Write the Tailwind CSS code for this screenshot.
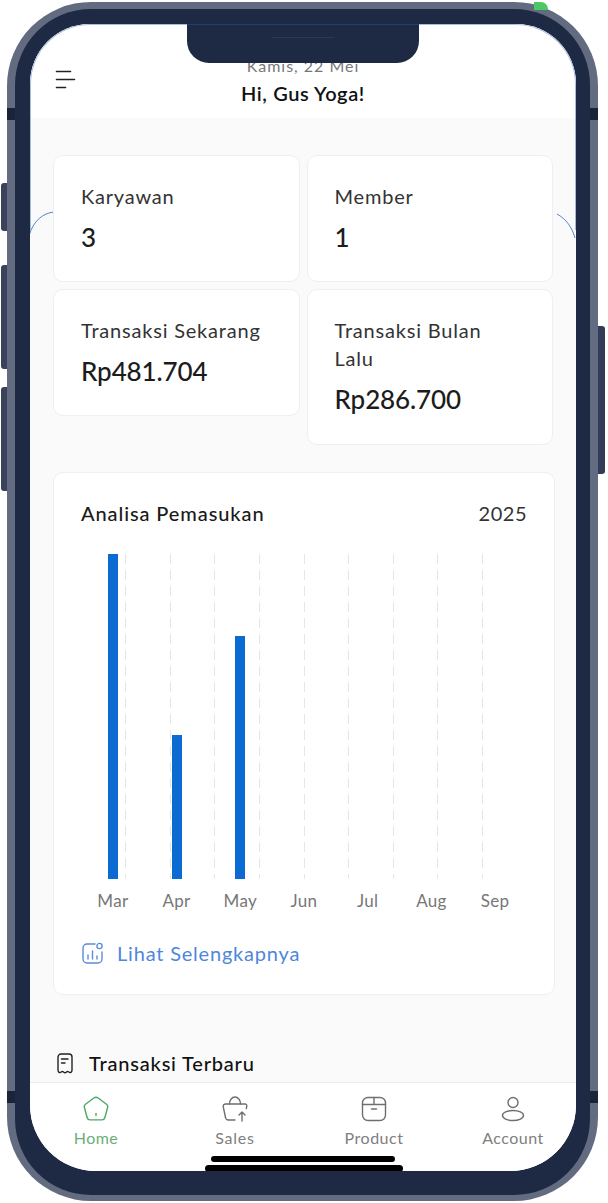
<!DOCTYPE html>
<html lang="en">
  <head>
    <meta charset="UTF-8" />
    <meta name="viewport" content="width=device-width, initial-scale=1.0" />
    <title>Dashboard</title>
    <script src="https://cdn.jsdelivr.net/npm/@tailwindcss/browser@4"></script>
  </head>
  <body class="bg-white font-['Lato',sans-serif] w-[608px] h-[1203px] overflow-hidden">
    <!-- Phone frame -->
    <div class="relative ml-[7px] mt-[2px] w-[591px] h-[1199px] rounded-[84px] bg-[#636b80] pl-[8px] pr-[8px] pt-[7px] pb-[6px]">
      <!-- Side buttons -->
      <div class="absolute -left-[6px] top-[181px] w-[6px] h-[48px] rounded-l-[3px] bg-[#3b435a]"></div>
      <div class="absolute -left-[6px] top-[263px] w-[6px] h-[104px] rounded-l-[3px] bg-[#3b435a]"></div>
      <div class="absolute -left-[6px] top-[385px] w-[6px] h-[104px] rounded-l-[3px] bg-[#3b435a]"></div>
      <div class="absolute -right-[7px] top-[324px] w-[7px] h-[148px] rounded-r-[3px] bg-[#333c57]"></div>
      <!-- Antenna slots -->
      <div class="absolute left-0 top-[106px] w-[8px] h-[12px] bg-[#1a2338]"></div>
      <div class="absolute right-0 top-[106px] w-[8px] h-[12px] bg-[#1a2338]"></div>
      <div class="absolute left-0 top-[1089px] w-[8px] h-[12px] bg-[#1a2338]"></div>
      <div class="absolute right-0 top-[1089px] w-[8px] h-[12px] bg-[#1a2338]"></div>
      <!-- Green corner artifact -->
      <div class="absolute left-[527px] top-0 w-[14px] h-[8px] rounded-tr-[7px] bg-[#4cc764]"></div>

      <!-- Bezel -->
      <div class="relative h-full rounded-[76px] bg-[#1e2a44] pl-[15px] pr-[14px] pt-[15px] pb-[24px]">
        <!-- Screen -->
        <div class="relative h-full rounded-t-[60px] rounded-b-[66px] overflow-hidden bg-[#fafafa] flex flex-col">
          <!-- Notch -->
          <div class="absolute left-[157px] top-0 w-[232px] h-[39px] rounded-b-[22px] bg-[#1e2a44] z-10">
            <div class="mx-auto mt-[13px] w-[62px] h-px bg-[#2d3852]"></div>
          </div>
          <!-- Blue edge on the upper screen -->
          <div class="absolute inset-x-0 top-0 h-[206px] rounded-t-[60px] border-x border-t border-[#2a5bb0]/40 z-10 pointer-events-none"></div>

          <!-- Header -->
          <div class="relative h-[94px] bg-white shrink-0">
            <svg class="absolute left-[25px] top-[45px]" width="21" height="20" viewBox="0 0 21 20" fill="none" stroke="#222" stroke-width="1.6" stroke-linecap="round">
              <path d="M1.500 2.500h14M1.500 10.500h18M1.500 18.500h9" />
            </svg>
            <div class="flex flex-col items-center pt-[31px]">
              <div class="text-[16px] leading-[22px] text-[#777] tracking-[1px]">Kamis, 22 Mei</div>
              <div class="mt-[2px] text-[20px] leading-[28px] font-semibold text-[#111] tracking-[0.6px]">Hi, Gus Yoga!</div>
            </div>
          </div>

          <!-- Content -->
          <div class="flex-1 min-h-0 px-[23px] pt-[37px] relative">
            <svg class="absolute -left-px top-[93px]" width="26" height="26" viewBox="0 0 26 26" fill="none" stroke="#2f66c4" stroke-width="0.8"><path d="M0 25C4 10 14 2 25 1" /></svg>
            <svg class="absolute right-0 top-[95px]" width="20" height="26" viewBox="0 0 20 26" fill="none" stroke="#2f66c4" stroke-width="0.8"><path d="M1 1C10 6 16 14 19 25" /></svg>

            <div class="flex gap-[7px] items-start relative">
              <div class="w-[247px] h-[127px] rounded-[10px] border border-[#efefef] bg-white pt-[26px] pl-[27px]">
                <div class="text-[20px] leading-[28px] text-[#333] tracking-[0.8px]">Karyawan</div>
                <div class="mt-[11px] text-[26px] leading-[32px] font-medium text-[#1c1c1c]">3</div>
              </div>
              <div class="w-[247px] h-[127px] rounded-[10px] border border-[#efefef] bg-white pt-[26px] pl-[27px]">
                <div class="text-[20px] leading-[28px] text-[#333] tracking-[0.8px]">Member</div>
                <div class="mt-[11px] text-[26px] leading-[32px] font-medium text-[#1c1c1c]">1</div>
              </div>
            </div>
            <div class="mt-[7px] flex gap-[7px] items-start relative">
              <div class="w-[247px] h-[127px] rounded-[10px] border border-[#efefef] bg-white pt-[26px] pl-[27px]">
                <div class="text-[20px] leading-[28px] text-[#333] tracking-[0.8px]">Transaksi Sekarang</div>
                <div class="mt-[11px] text-[26px] leading-[32px] font-medium text-[#1c1c1c] -tracking-[0.1px]">Rp481.704</div>
              </div>
              <div class="w-[247px] h-[156px] rounded-[10px] border border-[#efefef] bg-white pt-[26px] pl-[27px]">
                <div class="w-[170px] text-[20px] leading-[28px] text-[#333] tracking-[0.8px]">Transaksi Bulan Lalu</div>
                <div class="mt-[11px] text-[26px] leading-[32px] font-medium text-[#1c1c1c] -tracking-[0.1px]">Rp286.700</div>
              </div>
            </div>

            <!-- Chart card -->
            <div class="relative mt-[27px] w-[502px] h-[523px] rounded-[10px] border border-[#efefef] bg-white pl-[27px] pr-[27px] pt-[26px]">
              <div class="flex justify-between items-center h-[28px]">
                <div class="text-[20px] font-medium text-[#1a1a1a] tracking-[0.9px]">Analisa Pemasukan</div>
                <div class="text-[20px] text-[#333] tracking-[0.5px]">2025</div>
              </div>
              <div class="relative mt-[27px] h-[325px]">
                <div class="absolute left-[44px] right-[44px] top-0 bottom-0 flex justify-between">
                  <div class="w-px bg-[repeating-linear-gradient(to_bottom,#e6e6e6_0,#e6e6e6_10px,transparent_10px,transparent_16px)]"></div>
                  <div class="w-px bg-[repeating-linear-gradient(to_bottom,#e6e6e6_0,#e6e6e6_10px,transparent_10px,transparent_16px)]"></div>
                  <div class="w-px bg-[repeating-linear-gradient(to_bottom,#e6e6e6_0,#e6e6e6_10px,transparent_10px,transparent_16px)]"></div>
                  <div class="w-px bg-[repeating-linear-gradient(to_bottom,#e6e6e6_0,#e6e6e6_10px,transparent_10px,transparent_16px)]"></div>
                  <div class="w-px bg-[repeating-linear-gradient(to_bottom,#e6e6e6_0,#e6e6e6_10px,transparent_10px,transparent_16px)]"></div>
                  <div class="w-px bg-[repeating-linear-gradient(to_bottom,#e6e6e6_0,#e6e6e6_10px,transparent_10px,transparent_16px)]"></div>
                  <div class="w-px bg-[repeating-linear-gradient(to_bottom,#e6e6e6_0,#e6e6e6_10px,transparent_10px,transparent_16px)]"></div>
                  <div class="w-px bg-[repeating-linear-gradient(to_bottom,#e6e6e6_0,#e6e6e6_10px,transparent_10px,transparent_16px)]"></div>
                  <div class="w-px bg-[repeating-linear-gradient(to_bottom,#e6e6e6_0,#e6e6e6_10px,transparent_10px,transparent_16px)]"></div>
                </div>
                <div class="relative h-full grid grid-cols-7 items-end justify-items-center">
                  <div class="w-[10px] h-[325px] bg-[#0b6bd3]"></div>
                  <div class="w-[10px] h-[144px] bg-[#0b6bd3]"></div>
                  <div class="w-[10px] h-[243px] bg-[#0b6bd3]"></div>
                  <div></div><div></div><div></div><div></div>
                </div>
              </div>
              <div class="mt-[10px] grid grid-cols-7 text-center text-[17px] leading-[24px] text-[#777] tracking-[0.3px]">
                <div>Mar</div><div>Apr</div><div>May</div><div>Jun</div><div>Jul</div><div>Aug</div><div>Sep</div>
              </div>
              <div class="mt-[26px] flex items-center gap-[14px]">
                <svg width="22" height="22" viewBox="0 0 22 22" fill="none" stroke="#5b8ddb" stroke-width="1.4" stroke-linecap="round" class="shrink-0 ml-px">
                  <path d="M13 2H5a4 4 0 0 0-4 4v11a4 4 0 0 0 4 4h11a4 4 0 0 0 4-4V10" />
                  <circle cx="17.500" cy="4" r="2.600" />
                  <path d="M6 17v-4M10.500 17V9M15 17v-3" />
                </svg>
                <div class="-ml-px text-[20px] leading-[28px] text-[#4f86d9] tracking-[0.8px]">Lihat Selengkapnya</div>
              </div>
            </div>

            <!-- Recent transactions -->
            <div class="mt-[54px] ml-[4px] flex items-center gap-[17px]">
              <svg width="16" height="21" viewBox="0 0 16 21" fill="none" stroke="#222" stroke-width="1.4" stroke-linecap="round" stroke-linejoin="round" class="shrink-0">
                <path d="M1 17V4a3 3 0 0 1 3-3h8a3 3 0 0 1 3 3v13c0 3-2 3-3.500 1.800C10 17.500 9.500 19.800 8 19.800S6 17.500 4.500 18.800C3 20 1 20 1 17Z" />
                <path d="M4.500 6H11M4.500 10H8" />
              </svg>
              <div class="-ml-px text-[20px] leading-[28px] font-medium text-[#111] tracking-[0.8px]">Transaksi Terbaru</div>
            </div>
          </div>

          <!-- Bottom nav -->
          <div class="relative h-[89px] shrink-0 bg-white border-t border-[#ececec] pl-[26px] pr-[23px] pt-[13px] flex justify-between">
            <div class="w-[80px] flex flex-col items-center">
              <svg width="26" height="26" viewBox="0 0 26 26" fill="none" stroke="#4fa862" stroke-width="1.4" stroke-linecap="round" stroke-linejoin="round">
                <path d="M10.800 2 2.500 8.300a3 3 0 0 0-1.100 3.200l2.800 10.200a3 3 0 0 0 2.900 2.200h11.800a3 3 0 0 0 2.900-2.200l2.800-10.200a3 3 0 0 0-1.100-3.200L15.200 2a3.700 3.700 0 0 0-4.400 0Z" />
                <path d="M13 17.500v2" />
              </svg>
              <div class="mt-[4px] text-[16px] leading-[24px] text-[#6aae7a] tracking-[0.5px]">Home</div>
            </div>
            <div class="w-[80px] flex flex-col items-center">
              <svg width="26" height="26" viewBox="0 0 26 26" fill="none" stroke="#6f6f6f" stroke-width="1.4" stroke-linecap="round" stroke-linejoin="round">
                <path d="M13 24H6.500a3 3 0 0 1-3-2.500L1.200 10.500C1 9 2 8 3.500 8H23a1.800 1.800 0 0 1 1.800 2.200l-.5 2.300" />
                <path d="M7.500 8C7.500 4 10 1 13 1s5.500 3 5.500 7" />
                <path d="M20 25v-9M17 19l3-3 3 3" />
              </svg>
              <div class="mt-[4px] text-[16px] leading-[24px] text-[#808080] tracking-[0.8px]">Sales</div>
            </div>
            <div class="w-[80px] flex flex-col items-center">
              <svg width="26" height="26" viewBox="0 0 26 26" fill="none" stroke="#6f6f6f" stroke-width="1.4" stroke-linecap="round" stroke-linejoin="round">
                <rect x="1.500" y="1.500" width="23" height="23" rx="5.500" />
                <path d="M1.500 8.500h23M13 1.500v7M10.500 13h5" />
              </svg>
              <div class="mt-[4px] text-[16px] leading-[24px] text-[#808080] tracking-[0.5px]">Product</div>
            </div>
            <div class="w-[80px] flex flex-col items-center">
              <svg width="26" height="26" viewBox="0 0 26 26" fill="none" stroke="#6f6f6f" stroke-width="1.4">
                <circle cx="13" cy="6.500" r="5" />
                <ellipse cx="13" cy="19.500" rx="10.500" ry="5" />
              </svg>
              <div class="mt-[4px] text-[16px] leading-[24px] text-[#808080] tracking-[0.5px]">Account</div>
            </div>
            <!-- Home indicator -->
            <div class="absolute left-[181px] top-[73px] w-[184px] h-[6px] rounded-full bg-black"></div>
            <div class="absolute left-[175px] top-[82px] w-[198px] h-[7px] rounded-full bg-black"></div>
          </div>
        </div>
      </div>
    </div>
  </body>
</html>
